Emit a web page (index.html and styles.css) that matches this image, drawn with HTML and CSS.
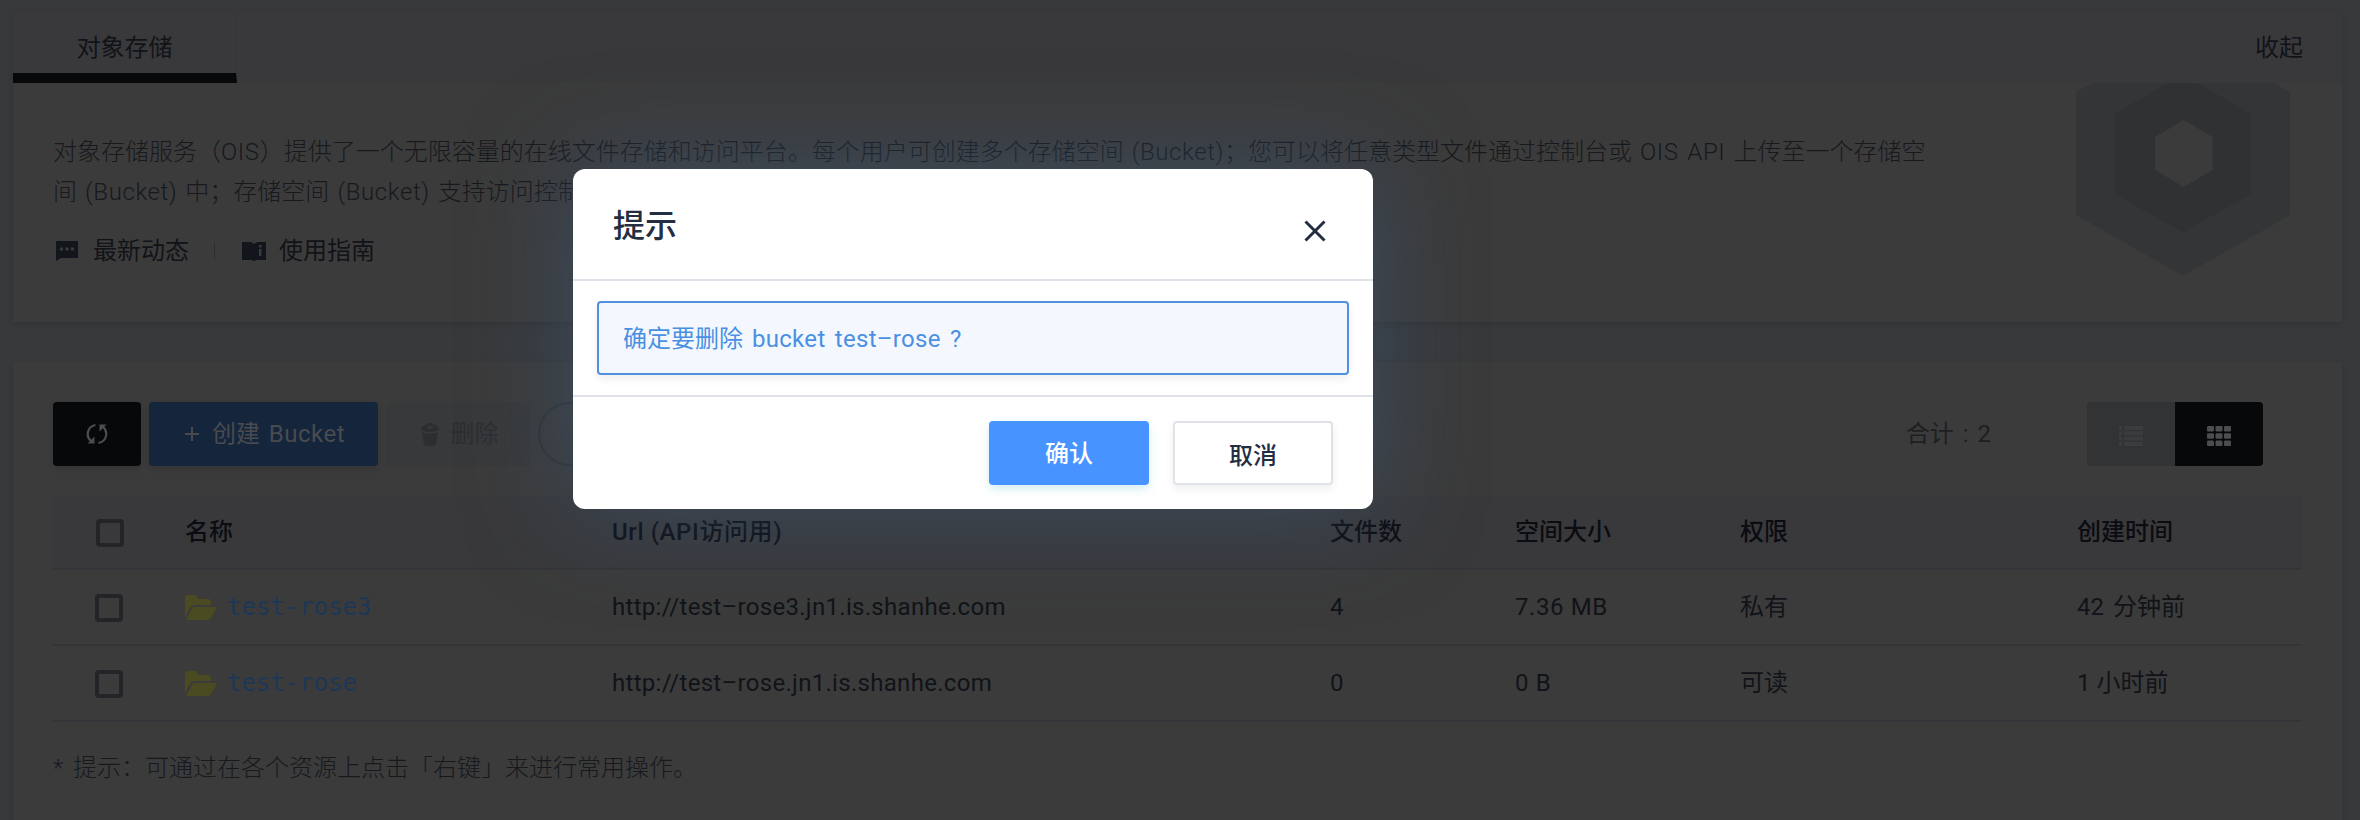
FILE: index.html
```html
<!DOCTYPE html>
<html lang="zh-CN">
<head>
<meta charset="utf-8">
<title>对象存储</title>
<link rel="stylesheet" href="styles.css">
</head>
<body>
<main class="page">
  <section class="card intro">
    <header class="tabs">
      <div class="tab">对象存储</div>
      <a class="collapse">收起</a>
    </header>
    <div class="intro-body">
      <div class="intro-text">
        <p class="desc">对象存储服务（<span class="lat">OIS</span>）提供了一个无限容量的在线文件存储和访问平台。每个用户可创建多个存储空间 <span class="lat">(Bucket)</span>；您可以将任意类型文件通过控制台或 <span class="lat">OIS API</span> 上传至一个存储空<br>间 <span class="lat">(Bucket)</span> 中；存储空间 <span class="lat">(Bucket)</span> 支持访问控制</p>
        <div class="links">
          <svg class="ic-chat" width="22" height="20" viewBox="0 0 22 20"><path d="M0 0h22v17H5l-5 3z" fill="#12151c"/><path d="M4 6.500h3v3H4zM9.500 6.500h3v3h-3zM15 6.500h3v3h-3z" fill="#3b3b3b"/></svg>
          <a>最新动态</a><i class="sep"></i>
          <svg class="ic-book" width="24" height="20" viewBox="0 0 24 20"><path d="M0 1h8q2 0 4 2 2-2 4-2h8v18h-9.500l-2.500 1-2.500-1H0z" fill="#12151c"/><path d="M17 4h2.500v2.500H17zM17 8h2.500v7H17z" fill="#3b3b3b"/></svg>
          <a>使用指南</a>
        </div>
      </div>
      <svg class="hex" width="214" height="193" viewBox="0 0 214 193"><path d="M16 0H198L214 9V132L107 193 0 132V9z" fill="#343537"/><path d="M92 0H121L175 31V111L107 149 39 111V31z" fill="#303132"/><path d="M107.500 37L136.500 54V87L107.500 104 79 87V54z" fill="#3b3b3b"/></svg>
    </div>
  </section>
  <section class="card list">
    <div class="toolbar">
      <button class="btn refresh"><svg width="22" height="22" viewBox="0 0 22 22" fill="none" stroke="#4c4d4e" stroke-width="2.200"><path d="M9.500 2C1 3.500-.5 13.500 5 18M12.500 20C21 18.500 22.500 8.500 17 4"/><path d="M1.500 20.500h7v-7zM20.500 1.500h-7v7z" fill="#4c4d4e" stroke="none"/></svg></button>
      <button class="btn create"><svg width="14" height="14" viewBox="0 0 14 14"><path d="M7 0v14M0 7h14" stroke="#484b4f" stroke-width="2"/></svg><span>创建 <span class="lat">Bucket</span></span></button>
      <button class="btn delete"><svg width="18" height="23" viewBox="0 0 18 23" fill="#2c2e32"><path d="M0 5q1-2 4-3l3-2h4l3 2q3 1 4 3v2q-9 4-18 0z"/><path d="M1 9q8 3 16 0l-2 12q-1 2-6 2t-6-2z"/><path d="M5 4.500l4-2 4 2-4 1.500z" fill="#38393a"/></svg><span>删除</span></button>
      <div class="search"></div>
      <div class="total">合计 : 2</div>
      <div class="views">
        <div class="view"><svg width="24" height="20" viewBox="0 0 24 20" fill="#3b3c3d"><path d="M0 0h3v4H0zM5 0h19v4H5zM0 5.300h3v4H0zM5 5.300h19v4H5zM0 10.600h3v4H0zM5 10.600h19v4H5zM0 16h3v4H0zM5 16h19v4H5z"/></svg></div>
        <div class="view on"><svg width="24" height="20" viewBox="0 0 24 20" fill="#4c4d4e"><g id="r"><rect width="7" height="5.500" rx="1.200"/><rect x="8.500" width="7" height="5.500" rx="1.200"/><rect x="17" width="7" height="5.500" rx="1.200"/></g><use href="#r" y="7.200"/><use href="#r" y="14.500"/></svg></div>
      </div>
    </div>
    <div class="table">
      <div class="row head"><i class="check"></i><b>名称</b><b class="lat">Url (API访问用)</b><b>文件数</b><b>空间大小</b><b>权限</b><b>创建时间</b></div>
      <div class="row"><i class="check"></i><div class="name"><svg width="32" height="25" viewBox="0 0 32 25" fill="#4a4b20"><path d="M0 22V3q0-3 3-3h7q2 0 2.500 2l.5 2h10q3 0 3 3v3H10q-3 0-4.500 2z"/><path d="M10 12H32l-5.500 10.500Q25 25 22 25H1L7 14q1-2 3-2z"/></svg><span>test-rose3</span></div><div class="url">http://test–rose3.jn1.is.shanhe.com</div><div>4</div><div class="lat">7.36 MB</div><div>私有</div><div class="time">42 分钟前</div></div>
      <div class="row"><i class="check"></i><div class="name"><svg width="32" height="25" viewBox="0 0 32 25" fill="#4a4b20"><path d="M0 22V3q0-3 3-3h7q2 0 2.500 2l.5 2h10q3 0 3 3v3H10q-3 0-4.500 2z"/><path d="M10 12H32l-5.500 10.500Q25 25 22 25H1L7 14q1-2 3-2z"/></svg><span>test-rose</span></div><div class="url">http://test–rose.jn1.is.shanhe.com</div><div>0</div><div class="lat">0 B</div><div>可读</div><div>1 小时前</div></div>
    </div>
    <p class="tip">* 提示：可通过在各个资源上点击「右键」来进行常用操作。</p>
  </section>
</main>
<div class="modal">
  <header class="m-head"><h2>提示</h2><svg width="22" height="22" viewBox="0 0 22 22"><path d="M1.500 1.500l19 19M20.500 1.500l-19 19" stroke="#242e42" stroke-width="3"/></svg></header>
  <div class="m-body"><div class="alert">确定要删除 <span class="msg">bucket test–rose ?</span></div></div>
  <footer class="m-foot"><button class="mb-btn ok">确认</button><button class="mb-btn cancel">取消</button></footer>
</div>
</body>
</html>
```
FILE: styles.css
```css
* { box-sizing: border-box; }
body { margin: 0; width: 2360px; height: 820px; overflow: hidden; background: #38393b; font: 24px/36px Roboto, "Noto Sans CJK SC", sans-serif; color: #111318; white-space: nowrap; }
p, h2 { margin: 0; }
button { font: inherit; border: 0; padding: 0; }
svg { flex: none; display: block; }
.lat { letter-spacing: .6px; }
.page { padding: 12px 18px 0 13px; display: flex; flex-direction: column; gap: 40px; }
.card { background: #3b3b3b; box-shadow: 0 2px 6px rgba(0,0,0,.12); }
.intro { height: 310px; }
.tabs { height: 71px; background: #39393b; display: flex; justify-content: space-between; }
.tab { width: 224px; border-bottom: 10px solid #07080a; border-right: 1px solid #353638; text-align: center; line-height: 73px; }
.collapse { line-height: 73px; padding-right: 39px; }
.intro-body { display: flex; justify-content: space-between; padding: 0 52px 0 40px; }
.intro-text { padding-top: 49px; }
.desc { line-height: 40px; color: #17191d; font-weight: 300; word-spacing: 2.2px; }
.links { display: flex; align-items: center; margin-top: 21px; height: 36px; }
.ic-chat { margin: 0 15px 0 3px; }
.sep { width: 1px; height: 16px; background: #2b2c2e; margin: 0 27px 0 25px; }
.ic-book { margin-right: 13px; }
.list { height: 470px; padding: 40px 40px 0; }
.toolbar { display: flex; height: 64px; }
.btn { height: 64px; border-radius: 4px; display: flex; align-items: center; justify-content: center; box-shadow: 0 3px 6px rgba(0,0,0,.12); }
.refresh { width: 88px; background: #07080a; margin-right: 8px; }
.create { width: 229px; background: #15253c; color: #484b4f; gap: 13px; margin-right: 8px; padding-left: 3px; word-spacing: 3px; }
.create .lat { letter-spacing: .5px; }
.delete { width: 144px; background: #38393a; color: #2c2e32; gap: 12px; margin-right: 8px; padding-left: 3px; box-shadow: none; }
.search { width: 360px; border: 2px solid #303338; border-radius: 32px; }
.total { margin-left: auto; line-height: 64px; color: #1d1f23; margin-right: 96px; word-spacing: 3px; }
.views { display: flex; margin-right: 39px; border-radius: 4px; overflow: hidden; }
.view { width: 88px; display: grid; place-items: center; padding-top: 3px; background: #313335; }
.on { background: #07080a; }
.table { margin-top: 30px; }
.row { height: 76px; display: grid; grid-template-columns: 132px 427px 718px 185px 225px 337px 1fr; align-items: center; border-bottom: 2px solid #343538; }
.head { background: #39393b; height: 74px; color: #0b0c12; }
.row b { font-weight: 500; }
.check { width: 28px; height: 28px; border: 4px solid #232428; border-radius: 4px; margin: 2px 0 0 42px; }
.head .check { margin-left: 43px; }
.name { display: flex; align-items: center; gap: 10px; color: #1e3757; font-family: "DejaVu Sans Mono", monospace; }
.url { letter-spacing: .3px; }
.time { word-spacing: 3px; }
.tip { margin-top: 28px; color: #17191d; font-weight: 300; word-spacing: 4px; }
.modal { position: absolute; left: 573px; top: 169px; width: 800px; height: 340px; border-radius: 12px; background: #fff; box-shadow: 0 0 100px rgba(62,89,119,.6); display: flex; flex-direction: column; color: #242e42; }
.m-head { height: 112px; border-bottom: 2px solid #dfe2e9; display: flex; justify-content: space-between; align-items: center; padding: 13px 47px 0 40px; }
.m-head h2 { font-size: 32px; font-weight: 500; line-height: 40px; margin-top: -10px; }
.m-body { height: 116px; border-bottom: 2px solid #dfe2e9; padding: 20px 24px; }
.alert { height: 74px; border: 2px solid #5190de; border-radius: 4px; background: #f4f8fe; color: #4a90e2; line-height: 72px; padding-left: 24px; word-spacing: 3px; box-shadow: 0 4px 8px rgba(36,46,66,.08); }
.msg { letter-spacing: .3px; }
.m-foot { display: flex; justify-content: flex-end; gap: 24px; padding: 24px 40px; }
.mb-btn { width: 160px; height: 64px; border-radius: 4px; font-weight: 500; box-shadow: 0 4px 8px rgba(36,46,66,.08); }
.ok { background: #4793ff; color: #fff; padding-top: 2px; box-shadow: 0 4px 8px rgba(85,188,190,.25); }
.cancel { background: #fff; border: 2px solid #dfe2e9; color: #242e42; padding-top: 6px; }
```
